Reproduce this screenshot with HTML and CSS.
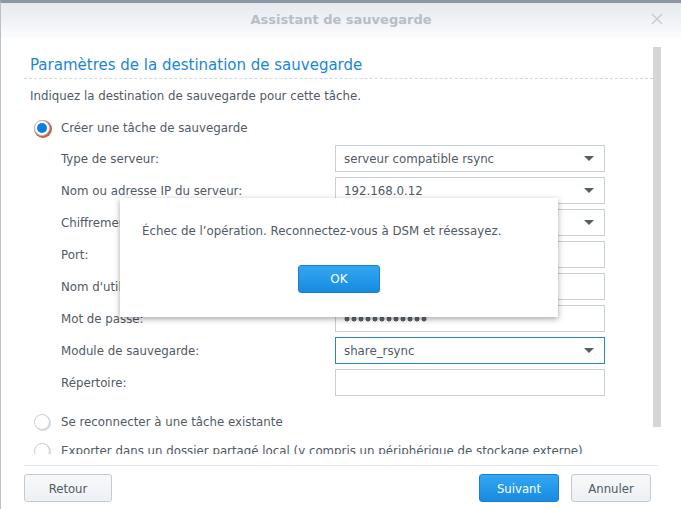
FILE: index.html
```html
<html>
  <head>
    <title>Assistant de sauvegarde</title>
    <link rel="stylesheet" href="styles.css">
  </head>
  <body>
    <div class="window">
      <div class="titlebar">
        <span class="title">Assistant de sauvegarde</span>
        <span class="closeBtn">
          <svg width="12" height="12" viewBox="0 0 12 12">
            <path d="M1 1 L11 11 M11 1 L1 11" stroke="#c5cad0" stroke-width="1.4" fill="none"/>
          </svg>
        </span>
      </div>

      <div class="body">
        <div class="scrollArea">
          <h2 class="stepTitle">Paramètres de la destination de sauvegarde</h2>
          <p class="hint">Indiquez la destination de sauvegarde pour cette tâche.</p>

          <div class="radioRow">
            <span class="radio checked"></span>
            <span>Créer une tâche de sauvegarde</span>
          </div>

          <div class="form">
            <div class="formRow">
              <label>Type de serveur:</label>
              <div class="field combo"><span>serveur compatible rsync</span><i class="arrow"></i></div>
            </div>
            <div class="formRow">
              <label>Nom ou adresse IP du serveur:</label>
              <div class="field combo"><span>192.168.0.12</span><i class="arrow"></i></div>
            </div>
            <div class="formRow">
              <label>Chiffrement du transfert:</label>
              <div class="field combo"><span>Oui</span><i class="arrow"></i></div>
            </div>
            <div class="formRow">
              <label>Port:</label>
              <div class="field"><span>873</span></div>
            </div>
            <div class="formRow">
              <label>Nom d'utilisateur:</label>
              <div class="field"><span>backup</span></div>
            </div>
            <div class="formRow">
              <label>Mot de passe:</label>
              <!-- masked password, 12 characters -->
              <div class="field"><span class="dots"></span></div>
            </div>
            <div class="formRow">
              <label>Module de sauvegarde:</label>
              <div class="field combo focused"><span>share_rsync</span><i class="arrow"></i></div>
            </div>
            <div class="formRow">
              <label>Répertoire:</label>
              <div class="field"></div>
            </div>
          </div>

          <div class="radioRow second">
            <span class="radio"></span>
            <span>Se reconnecter à une tâche existante</span>
          </div>
          <div class="radioRow third">
            <span class="radio"></span>
            <span>Exporter dans un dossier partagé local (y compris un périphérique de stockage externe)</span>
          </div>
        </div>
        <div class="scrollTrack"><div class="scrollThumb"></div></div>
      </div>

      <div class="footer">
        <button class="btn back">Retour</button>
        <div class="spacer"></div>
        <button class="btn primary">Suivant</button>
        <button class="btn">Annuler</button>
      </div>

      <!-- message box on top of the wizard -->
      <div class="msgBox">
        <p class="msgText">Échec de l’opération. Reconnectez-vous à DSM et réessayez.</p>
        <div class="msgActions">
          <button class="btn primary okBtn">OK</button>
        </div>
      </div>
    </div>
  </body>
</html>
```

FILE: styles.css
```css
body {
  margin: 0;
  background: #ffffff;
  font-family: "DejaVu Sans", Verdana, sans-serif;
  font-size: 11.8px;
  color: #505a64;
}

.window {
  position: relative;
  width: 681px;
  height: 509px;
  border-top: 3px solid #8b97a2;
  border-left: 1px solid #b9c0c7;
  box-sizing: border-box;
  overflow: hidden;
}

.titlebar {
  height: 35px;
  display: flex;
  align-items: center;
  justify-content: center;
  position: relative;
  background: linear-gradient(#e5e9ee, #fbfcfd);
}
.title {
  font-weight: bold;
  font-size: 13px;
  color: #b7bec6;
  margin-top: -3px;
}
.closeBtn {
  position: absolute;
  right: 18px;
  top: 10px;
}

.body {
  display: flex;
  height: 416px;
}
.scrollArea {
  width: 629px;
  padding-left: 23px;
  overflow: hidden;
}
.stepTitle {
  margin: 17px 0 0 0;
  padding: 0 0 3px 6px;
  font-weight: normal;
  font-size: 15px;
  line-height: 20px;
  color: #1a86d8;
  border-bottom: 1px dashed #d3d8dd;
}
.hint {
  margin: 8px 0 0 6px;
  line-height: 18px;
}

.radioRow {
  display: flex;
  align-items: center;
  height: 18px;
  margin: 14px 0 0 10px;
}
.radioRow.second {
  margin-top: 17px;
}
.radioRow.third {
  margin-top: 11px;
  white-space: nowrap;
}
.radio {
  width: 14px;
  height: 14px;
  border-radius: 50%;
  border: 1px solid #c9cfd5;
  background: #fff;
  margin-right: 11px;
  box-shadow: 1px 1px 0 #d8dcdf;
  position: relative;
  flex: none;
}
.radio.checked {
  border-color: #b8bec4;
  box-shadow: 1px 1px 0 1px #c8643b;
}
.radio.checked::after {
  content: "";
  position: absolute;
  left: 2px;
  top: 2px;
  width: 10px;
  height: 10px;
  border-radius: 50%;
  background: #0a7de6;
}

.form {
  margin: 8px 0 0 37px;
  display: flex;
  flex-direction: column;
  gap: 5px;
}
.formRow {
  display: flex;
  align-items: center;
  height: 27px;
}
.formRow label {
  width: 274px;
}
.field {
  height: 25px;
  border: 1px solid #c8d0d7;
  display: flex;
  align-items: center;
  padding-left: 8px;
  box-sizing: content-box;
  width: 260px;
  color: #505a64;
}
.field.focused {
  border-color: #2a86c4;
}
.combo span {
  flex: 1;
}
.arrow {
  width: 0;
  height: 0;
  border-left: 5px solid transparent;
  border-right: 5px solid transparent;
  border-top: 5px solid #545d66;
  margin-right: 10px;
}
.dots {
  display: block;
  width: 83px;
  height: 6px;
  margin-top: 1px;
  background: radial-gradient(circle at 3px 3px, #5d666f 2.2px, transparent 2.8px) 0 0 / 7px 6px repeat-x;
}

.scrollTrack {
  width: 28px;
  padding-top: 9px;
}
.scrollThumb {
  width: 8px;
  height: 380px;
  background: #d6d6d6;
}

.footer {
  margin: 11px 23px 0 23px;
  border-top: 1px solid #e1e5e9;
  padding: 8px 7px 0 0;
  display: flex;
  gap: 12px;
}
.spacer {
  flex: 1;
}
.btn {
  height: 28px;
  min-width: 80px;
  padding: 0 12px;
  border: 1px solid #c3cad1;
  border-radius: 3px;
  background: linear-gradient(#f7f8fa, #eef1f4);
  font-family: "DejaVu Sans Condensed", "DejaVu Sans", sans-serif;
  font-size: 13px;
  color: #505a64;
}
.btn.back {
  min-width: 88px;
}
.btn.primary {
  border-color: #1b80cc;
  background: linear-gradient(#34a6f2, #168be0);
  color: #ffffff;
}

.msgBox {
  position: absolute;
  left: 119px;
  top: 195px;
  width: 438px;
  height: 119px;
  background: #ffffff;
  box-shadow: 0 2px 6px rgba(0, 0, 0, 0.35);
}
.msgText {
  margin: 25px 0 0 22px;
  line-height: 16px;
}
.msgActions {
  display: flex;
  justify-content: center;
  margin-top: 26px;
}
.okBtn {
  width: 82px;
  font-family: "DejaVu Sans", sans-serif;
  font-size: 12px;
}
```
